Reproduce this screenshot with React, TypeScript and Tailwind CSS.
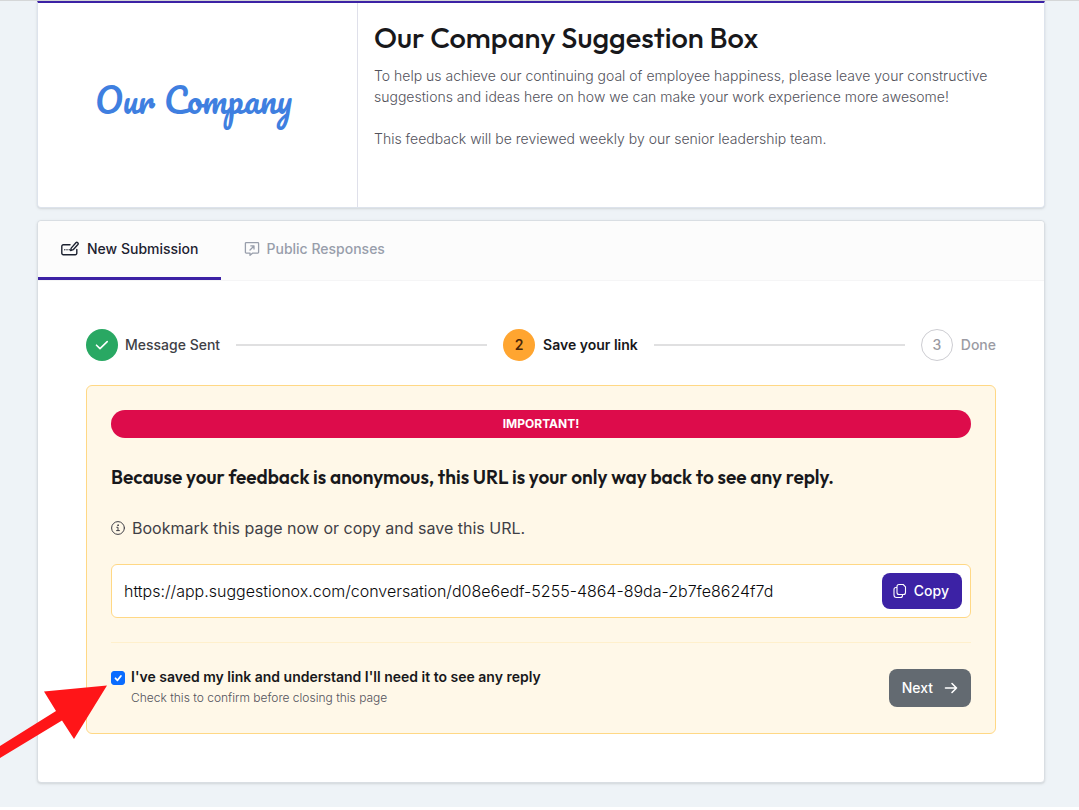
import React, { useState } from 'react'

const url = 'https://app.suggestionox.com/conversation/d08e6edf-5255-4864-89da-2b7fe8624f7d'

const ComposeIcon = () => (
  <svg className="h-[18px] w-[18px]" viewBox="0 0 18 18" fill="none" stroke="currentColor" strokeWidth="1.4" strokeLinecap="round" strokeLinejoin="round">
    <path d="M9 4.700H2.300A1.500 1.500 0 0 0 .8 6.200v7A1.500 1.500 0 0 0 2.300 14.700h12a1.500 1.500 0 0 0 1.500-1.500V9.500" />
    <path d="m10.200 8.100 4.700-5.400a1.350 1.350 0 0 1 2 1.800l-4.700 5.200-2.600.9.600-2.500Z" />
    <path d="M3.800 9.700h.01M6 9.700h.01M8.200 9.700h.01" />
  </svg>
)

const ResponseIcon = () => (
  <svg className="h-4 w-4" viewBox="0 0 16 16" fill="none" stroke="currentColor" strokeWidth="1.3" strokeLinecap="round" strokeLinejoin="round">
    <path d="M2.200 1.600h11.600a.8.8 0 0 1 .8.8v8.900a.8.8 0 0 1-.8.8H8.800L6 14.300v-2.200H2.200a.8.8 0 0 1-.8-.8V2.400a.8.8 0 0 1 .8-.8Z" />
    <path d="M6 9l4-4M6.800 4.800H10V8" />
  </svg>
)

const CheckIcon = () => (
  <svg className="h-4 w-4" viewBox="0 0 16 16" fill="none" stroke="currentColor" strokeWidth="1.6" strokeLinecap="round" strokeLinejoin="round">
    <path d="m2.500 8.200 3.500 3.400 7.200-7" />
  </svg>
)

const InfoIcon = () => (
  <svg className="h-[14px] w-[14px]" viewBox="1 1 14 14" fill="none" stroke="currentColor" strokeLinecap="round" strokeLinejoin="round">
    <circle cx="8" cy="8" r="6.400" />
    <path d="M6.800 7.300H8v3.200M6.600 10.600h2.800" />
    <circle cx="8" cy="5.200" r=".4" fill="currentColor" />
  </svg>
)

const CopyIcon = () => (
  <svg className="h-4 w-4" viewBox="0 0 16 16" fill="none" stroke="currentColor" strokeWidth="1.1" strokeLinejoin="round">
    <path d="M7 1.500h4.200L13.500 3.800v5.700a2 2 0 0 1-2 2H7a2 2 0 0 1-2-2v-6a2 2 0 0 1 2-2Z" />
    <path d="M5 4.500H4a2 2 0 0 0-2 2V12a2.500 2.500 0 0 0 2.500 2.500h4a2 2 0 0 0 2-2v-1" />
  </svg>
)

const ArrowIcon = () => (
  <svg className="h-4 w-4" viewBox="0 0 16 16" fill="none" stroke="currentColor" strokeWidth="1.6" strokeLinecap="round" strokeLinejoin="round">
    <path d="M2.500 8h11M9 3.500 13.500 8 9 12.500" />
  </svg>
)

const Header = () => {
  return (
    <header className="flex min-h-[207px] rounded-b border border-t-2 border-[#dde3ec] border-t-[#3c22a5] bg-white shadow-sm">
      <div className="flex w-80 shrink-0 items-center justify-center border-r border-[#dfe0ea] pr-2 pb-3">
        <span className="font-[Pacifico,Lato,cursive] text-[34px] text-[#3f7fe0]">Our Company</span>
      </div>
      <div className="px-4 py-4">
        <h1 className="font-[Outfit,Lato,sans-serif] text-[29px] leading-[38px] font-medium text-[#18181b]">
          Our Company Suggestion Box
        </h1>
        <p className="mt-2 max-w-[640px] text-sm leading-[21px] font-light text-[#52525b]">
          To help us achieve our continuing goal of employee happiness, please leave your constructive suggestions and
          ideas here on how we can make your work experience more awesome!
        </p>
        <p className="mt-[21px] text-sm leading-[21px] font-light text-[#52525b]">
          This feedback will be reviewed weekly by our senior leadership team.
        </p>
      </div>
    </header>
  )
}

const Tabs = () => {
  return (
    <nav className="flex h-15 rounded-t border-b border-[#f5f5f6] bg-[#fcfcfc] text-sm font-medium">
      <a href="#new" className="flex items-center gap-2 border-b-3 border-[#3c22a5] pr-[22px] pl-[23px] text-[#1c2230]">
        <ComposeIcon />
        New Submission
      </a>
      <a href="#responses" className="flex items-center gap-[7px] border-b-3 border-transparent px-[23px] text-[#989eab]">
        <ResponseIcon />
        Public Responses
      </a>
    </nav>
  )
}

const Steps = () => {
  return (
    <ol className="flex items-center gap-4 text-sm font-medium">
      <li className="flex items-center gap-[7px] text-[#3f3f46]">
        <span className="flex h-8 w-8 items-center justify-center rounded-full bg-[#29a863] text-white">
          <CheckIcon />
        </span>
        Message Sent
      </li>
      <li aria-hidden="true" className="h-0.5 flex-1 bg-[#e0e0e1]"></li>
      <li className="flex items-center gap-2 font-semibold text-[#18181b]">
        <span className="flex h-8 w-8 items-center justify-center rounded-full bg-[#ffa530] text-[#4a2508]">2</span>
        Save your link
      </li>
      <li aria-hidden="true" className="h-0.5 flex-1 bg-[#e0e0e1]"></li>
      <li className="flex items-center gap-2 text-[#9b9ba3]">
        <span className="flex h-8 w-8 items-center justify-center rounded-full border border-[#cdcdd2]">3</span>
        Done
      </li>
    </ol>
  )
}

const SaveLink = () => {
  const [saved, setSaved] = useState(true)

  return (
    <section className="mt-6 rounded-md border border-[#ffd885] bg-[#fff8e8] p-6">
      <div className="rounded-full bg-[#dd0c4b] text-center text-xs leading-7 font-bold text-white">IMPORTANT!</div>
      <h2 className="mt-[23px] font-[Outfit,Lato,sans-serif] text-[19px] leading-8 font-semibold text-[#18181b]">
        Because your feedback is anonymous, this URL is your only way back to see any reply.
      </h2>
      <p className="mt-[23px] flex items-center gap-[7px] text-base text-[#3f3f46]">
        <InfoIcon />
        Bookmark this page now or copy and save this URL.
      </p>
      <div className="mt-6 flex items-center rounded-md border border-[#ffd885] bg-white p-2">
        <input
          type="text"
          readOnly
          aria-label="Conversation URL"
          value={url}
          className="min-w-0 flex-1 px-1 text-base font-light text-[#09090b] outline-none"
        />
        <button type="button" className="flex h-9 items-center gap-[6px] rounded-lg bg-[#3c22a5] pr-[13px] pl-[10px] text-sm font-medium text-white">
          <CopyIcon />
          Copy
        </button>
      </div>
      <div className="mt-6 flex items-start justify-between border-t border-[#fff0cc] pt-6">
        <label className="grid grid-cols-[14px_1fr] gap-x-[6px] text-sm leading-5 font-semibold text-[#18181b]">
          <span className="relative flex items-center pt-[2px]">
            <input
              type="checkbox"
              checked={saved}
              onChange={(e) => setSaved(e.target.checked)}
              className="peer h-[14px] w-[14px] appearance-none rounded-[3px] border border-[#0a6cff] checked:bg-[#0a6cff]"
            />
            <svg className="pointer-events-none absolute hidden h-[14px] w-[14px] peer-checked:block" viewBox="0 0 14 14" fill="none" stroke="#fff" strokeWidth="1.8" strokeLinecap="round" strokeLinejoin="round">
              <path d="m4.500 7.300 2 2L9.900 5" />
            </svg>
          </span>
          I've saved my link and understand I'll need it to see any reply
          <span className="col-start-2 text-xs leading-[22px] font-light text-[#52525b]">
            Check this to confirm before closing this page
          </span>
        </label>
        <button type="button" className="my-[2px] flex h-[38px] items-center gap-[10px] rounded-lg bg-[#636a71] pr-3 pl-[13px] text-sm font-medium text-white">
          Next
          <ArrowIcon />
        </button>
      </div>
    </section>
  )
}

const App = () => {
  return (
    <div className="relative overflow-hidden bg-white pb-[3px] font-[Inter,sans-serif]">
      <div className="border-t border-[#d5d7d8] bg-[#eef3f7] pr-[34px] pb-6 pl-[37px]">
        <Header />
        <main className="mt-3 rounded border border-[#d9dee3] bg-white shadow-sm">
          <Tabs />
          <div className="p-12">
            <Steps />
            <SaveLink />
          </div>
        </main>
      </div>
      {/* pointer towards the confirmation checkbox */}
      <svg className="pointer-events-none absolute top-[685px] left-0 h-[74px] w-[108px]" viewBox="0 0 108 74" fill="#ff1518">
        <path d="M107 .5 44 6.500 56 26 0 61v12L62 35.500 74 54Z" />
      </svg>
    </div>
  )
}

export default App
